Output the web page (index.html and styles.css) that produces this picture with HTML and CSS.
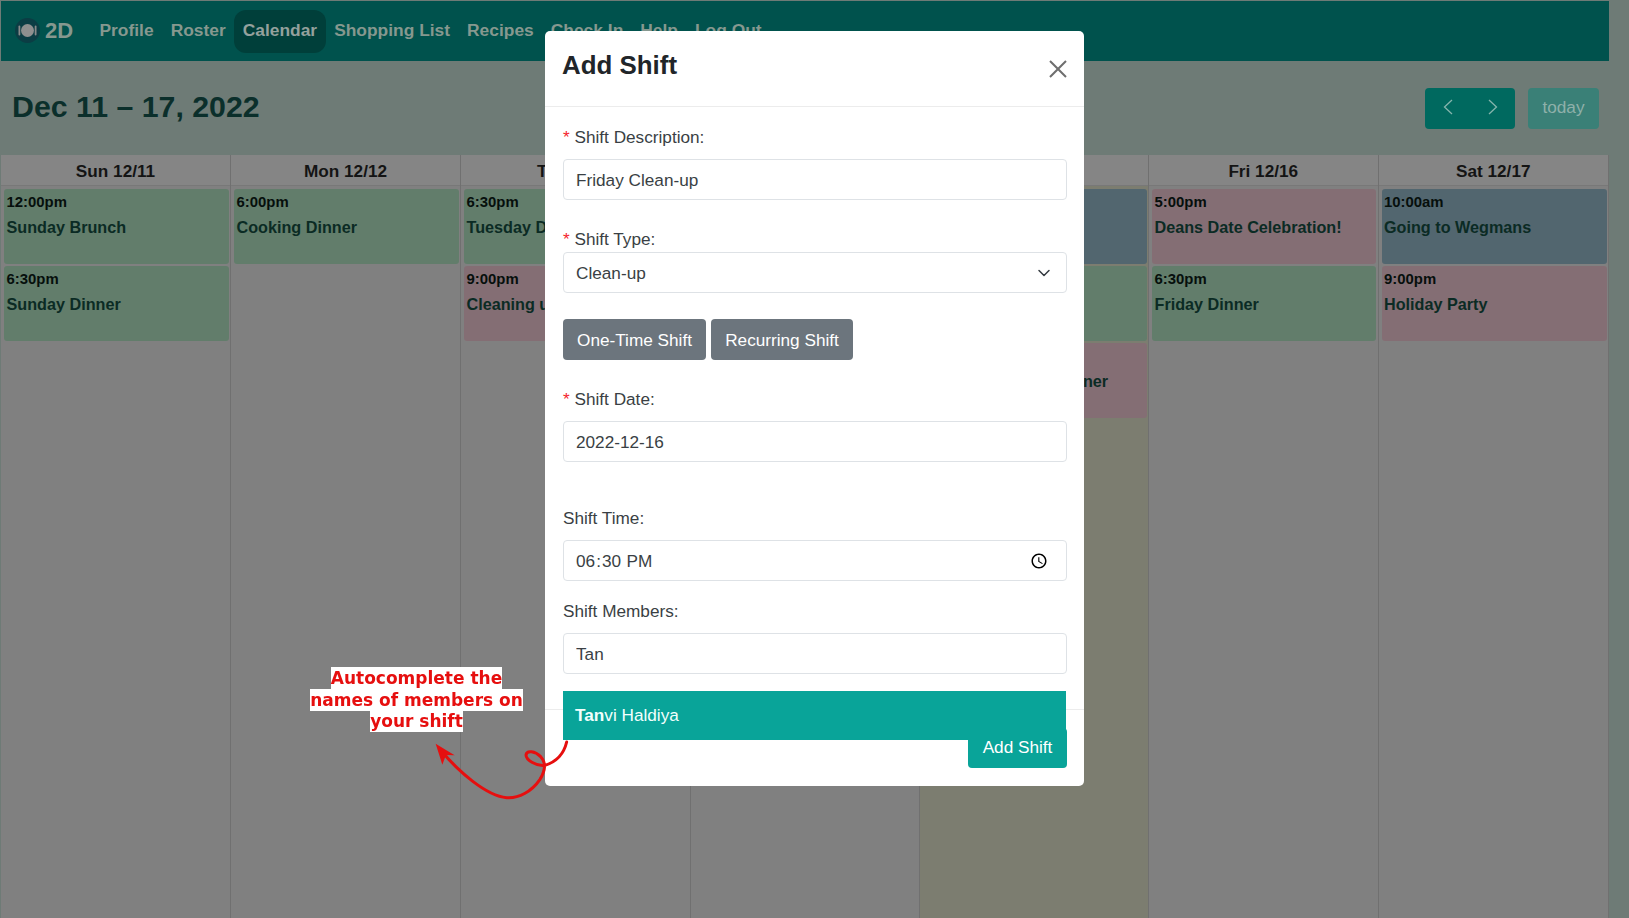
FILE: index.html
```html
<!DOCTYPE html>
<html lang="en">
<head>
<meta charset="utf-8">
<title>Calendar</title>
<link rel="stylesheet" href="styles.css">
</head>
<body>
<div class="page">
  <nav class="nav">
    <a class="brand">
      <svg class="logo" viewBox="0 0 25 25" width="25" height="25"><circle cx="12.500" cy="12.500" r="12.500" fill="#0b3d44"/><circle cx="12.500" cy="12.500" r="6.500" fill="#8f8f8f"/><rect x="3.500" y="7.500" width="1.800" height="10" rx=".9" fill="#8a8a8a"/><rect x="19.700" y="7.500" width="1.800" height="10" rx=".9" fill="#8a8a8a"/></svg>
      <span>2D</span>
    </a>
    <a class="nav-link">Profile</a>
    <a class="nav-link">Roster</a>
    <a class="nav-link active">Calendar</a>
    <a class="nav-link">Shopping List</a>
    <a class="nav-link">Recipes</a>
    <a class="nav-link">Check In</a>
    <a class="nav-link">Help</a>
    <a class="nav-link">Log Out</a>
  </nav>
  <header class="toolbar">
    <h1 class="range">Dec 11 – 17, 2022</h1>
    <div class="tools">
      <div class="btn-group">
        <button class="tool-btn"><svg viewBox="0 0 16 16" width="16" height="16"><path d="M12 1 4.500 8l7.500 7" fill="none" stroke="currentColor" stroke-width="1.300"/></svg></button>
        <button class="tool-btn"><svg viewBox="0 0 16 16" width="16" height="16"><path d="M4 1l7.500 7L4 15" fill="none" stroke="currentColor" stroke-width="1.300"/></svg></button>
      </div>
      <button class="today-btn">today</button>
    </div>
  </header>
  <section class="calendar">
    <div class="col">
      <div class="day">Sun 12/11</div>
      <div class="event green"><b>12:00pm</b><span>Sunday Brunch</span></div>
      <div class="event green"><b>6:30pm</b><span>Sunday Dinner</span></div>
    </div>
    <div class="col">
      <div class="day">Mon 12/12</div>
      <div class="event green"><b>6:00pm</b><span>Cooking Dinner</span></div>
    </div>
    <div class="col">
      <div class="day">Tue 12/13</div>
      <div class="event green"><b>6:30pm</b><span>Tuesday Dinner</span></div>
      <div class="event pink"><b>9:00pm</b><span>Cleaning up</span></div>
    </div>
    <div class="col">
      <div class="day">Wed 12/14</div>
    </div>
    <div class="col today">
      <div class="day">Thu 12/15</div>
      <div class="event blue"><b>5:00pm</b><span>Groceries</span></div>
      <div class="event green"><b>6:30pm</b><span>Thursday Dinner</span></div>
      <div class="event pink"><b>9:00pm</b><span>Christmas Pasty Dinner</span></div>
    </div>
    <div class="col">
      <div class="day">Fri 12/16</div>
      <div class="event pink"><b>5:00pm</b><span>Deans Date Celebration!</span></div>
      <div class="event green"><b>6:30pm</b><span>Friday Dinner</span></div>
    </div>
    <div class="col">
      <div class="day">Sat 12/17</div>
      <div class="event blue"><b>10:00am</b><span>Going to Wegmans</span></div>
      <div class="event pink"><b>9:00pm</b><span>Holiday Party</span></div>
    </div>
  </section>
</div>

<div class="modal">
  <div class="modal-head">
    <h2 class="modal-title">Add Shift</h2>
    <svg class="close" viewBox="0 0 18 18" width="18" height="18"><path d="M1 1l16 16M17 1 1 17" stroke="#6e6e6e" stroke-width="2" fill="none"/></svg>
  </div>
  <div class="modal-body">
    <div class="field"><label class="req">Shift Description:</label><input class="control" value="Friday Clean-up"></div>
    <div class="field type"><label class="req">Shift Type:</label>
      <div class="select-wrap">
        <select class="control select"><option>Clean-up</option></select>
        <svg class="chev" viewBox="0 0 16 16" width="16" height="16"><path d="M3 5.500 8 10.500l5-5" fill="none" stroke="#343a40" stroke-width="1.500" stroke-linecap="round" stroke-linejoin="round"/></svg>
      </div>
    </div>
    <div class="mode">
      <button class="mode-btn first">One-Time Shift</button>
      <button class="mode-btn second">Recurring Shift</button>
    </div>
    <div class="field date"><label class="req">Shift Date:</label><input class="control" value="2022-12-16"></div>
    <div class="field time"><label>Shift Time:</label><input class="control" type="time" value="18:30"></div>
    <div class="field members"><label>Shift Members:</label><input class="control" value="Tan"></div>
  </div>
  <div class="modal-foot"><button class="submit">Add Shift</button></div>
  <div class="suggest"><b>Tan</b>vi Haldiya</div>
</div>

<p class="note"><span>Autocomplete the<br>names of members on<br>your shift</span></p>
<svg class="arrow" viewBox="0 0 1200 834" width="400" height="278">
  <path d="M860 306C852 340 830 365 795 376C770 380 738 360 738 345C740 330 765 333 782 350C796 365 800 385 780 418C755 455 715 476 680 473C620 468 535 395 482 330" fill="none" stroke="#e60f0f" stroke-width="9" stroke-linecap="round"/>
  <path d="M467 311 524 346 498 345 487 374Z" fill="#e60f0f"/>
</svg>
</body>
</html>
```
FILE: styles.css
```css
* { box-sizing: border-box; }
html, body { height: 100%; }
body {
  margin: 0;
  overflow: hidden;
  background: #6e7b76;
  font-family: "Liberation Sans", Arial, sans-serif;
  font-size: 17.200px;
  color: #212529;
}
.page {
  width: 1608px;
  height: 917px;
  margin: 1px 0 0 1px;
  display: flex;
  flex-direction: column;
}
.nav {
  height: 60px;
  flex: none;
  display: flex;
  align-items: center;
  background: #00524d;
  font-weight: 700;
  font-size: 17.400px;
  color: #86988f;
  padding-left: 14px;
}
.brand {
  display: flex;
  align-items: center;
  gap: 5px;
  font-size: 22px;
  width: 76px;
  padding-bottom: 1px;
}
.logo { flex: none; }
.nav-link {
  padding: 0 8.500px 2px;
  height: 43px;
  display: flex;
  align-items: center;
  border-radius: 12px;
}
.nav-link.active { background: #003f3a; color: #94a19d; }
.toolbar {
  height: 94px;
  flex: none;
  display: flex;
  align-items: center;
  justify-content: space-between;
  padding: 0 10px 2px 11px;
}
.range { margin: 0; font-size: 30.300px; line-height: 1.2; color: #0b2f2b; }
.tools { display: flex; gap: 13px; margin-top: 2px; }
.btn-group { display: flex; }
.tool-btn, .today-btn {
  height: 41px;
  border: 0;
  padding: 0 0 2px;
  font: inherit;
  display: flex;
  align-items: center;
  justify-content: center;
}
.tool-btn { width: 45px; background: #00695f; color: #86b5ad; }
.tool-btn:first-child { border-radius: 4px 0 0 4px; }
.tool-btn:last-child { border-radius: 0 4px 4px 0; }
.today-btn { width: 71px; background: #3a8077; border-radius: 4px; color: #8fb0aa; }
.calendar {
  flex: 1;
  display: grid;
  grid-template-columns: 230px 230px 230px 229px 229px 229.500px 230.500px;
  background: #808080;
}
.col {
  border-right: 1px solid #707070;
  display: flex;
  flex-direction: column;
  padding: 0 1.500px 0 3px;
}
.col.today { background: #7c7d70; }
.day {
  height: 31px;
  margin: 0 -1.500px 3px -3px;
  padding-top: 2px;
  flex: none;
  display: flex;
  align-items: center;
  justify-content: center;
  background: #858585;
  border-bottom: 1px solid #787878;
  font-weight: 700;
  color: #141414;
}
.event {
  height: 75px;
  margin: 0 0 2px;
  padding: 3px 2.500px;
  border-radius: 3px;
  display: flex;
  flex-direction: column;
  color: #0b2b24;
}
.event b { font-size: 14.900px; line-height: 20px; color: #060f0c; }
.event span { font-size: 16.200px; font-weight: 700; line-height: 20px; margin-top: 5px; white-space: nowrap; }
.green { background: #627d6b; }
.pink { background: #846e74; }
.blue { background: #52666f; }
.modal {
  position: fixed;
  left: 545px;
  top: 31px;
  width: 539px;
  height: 755px;
  background: #fff;
  border-radius: 5px;
  display: flex;
  flex-direction: column;
}
.modal-head {
  height: 76px;
  flex: none;
  display: flex;
  justify-content: space-between;
  padding: 18px 17px 0 17px;
  border-bottom: 1px solid #ececec;
}
.modal-title { margin: 0; font-size: 25.900px; line-height: 32px; color: #212529; }
.close { margin-top: 11px; }
.modal-body { padding: 18px 17px 35px 18px; border-bottom: 1px solid #ececec; }
.field label { display: block; line-height: 24px; margin-bottom: 10px; color: #3a3f44; }
.req::before { content: "* "; color: #f5222d; }
.control {
  display: block;
  width: 100%;
  height: 41px;
  padding: 1px 12px 0;
  border: 1px solid #dee2e6;
  border-radius: 4px;
  background: #fff;
  font: inherit;
  color: #3a3f44;
}
.control::-webkit-datetime-edit { padding-top: 1px; margin-left: -1px; }
.control::-webkit-calendar-picker-indicator { margin-right: 3px; }
.field.type { margin-top: 27px; }
.field.type label { margin-bottom: 1px; }
.select-wrap { position: relative; }
.select { appearance: none; }
.chev { position: absolute; right: 15px; top: 13px; }
.mode { display: flex; gap: 5px; margin-top: 26px; }
.mode-btn {
  height: 41px;
  border: 0;
  border-radius: 4px;
  background: #6c757d;
  color: #fff;
  font: inherit;
  padding: 1px 0 0;
}
.mode-btn.first { width: 143px; }
.mode-btn.second { width: 142px; }
.field.date { margin-top: 27px; }
.field.time { margin-top: 44px; }
.field.members { margin-top: 18px; }
.modal-foot { display: flex; justify-content: flex-end; padding: 18px 17px 0 0; }
.submit {
  width: 99px;
  height: 40px;
  padding: 0 0 2px;
  border: 0;
  border-radius: 4px;
  background: #09a499;
  color: #fff;
  font: inherit;
}
.suggest {
  position: absolute;
  left: 18px;
  top: 660px;
  width: 503px;
  height: 49px;
  display: flex;
  align-items: center;
  padding-left: 12px;
  background: #09a499;
  color: #f2fffd;
  white-space: pre;
}
.note {
  position: fixed;
  left: 280px;
  top: 668px;
  width: 273px;
  margin: 0;
  text-align: center;
  font-family: "DejaVu Sans", sans-serif;
  font-weight: 700;
  font-size: 17px;
  line-height: 21.500px;
  color: #e60f0f;
}
.note span { background: #fff; padding: 1px 0; }
.arrow { position: fixed; left: 280px; top: 640px; }
```
